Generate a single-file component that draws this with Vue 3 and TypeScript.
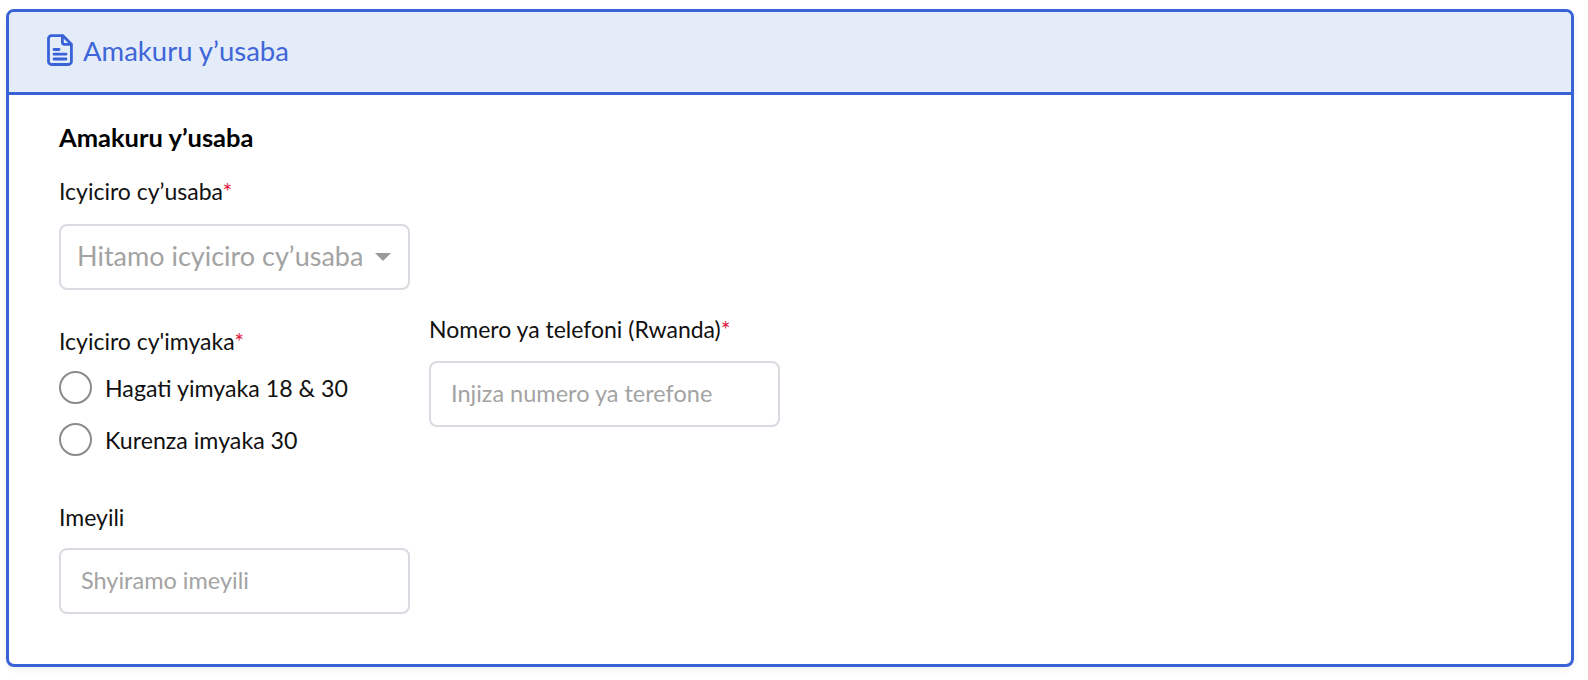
<script setup lang="ts">
const ageOptions = ["Hagati yimyaka 18 & 30", "Kurenza imyaka 30"];
</script>

<template>
  <div class="page">
    <section class="card">
      <header class="card-head">
        <svg class="head-icon" width="26" height="32" viewBox="0 0 26 32" fill="none" stroke="#3a62d7" stroke-width="2.8" stroke-linejoin="round" stroke-linecap="round">
          <path d="M4.5 1.6h11.2l8.7 8.7v17.2a3 3 0 0 1-3 3H4.5a3 3 0 0 1-3-3V4.6a3 3 0 0 1 3-3z" />
          <path d="M15.4 2v6.2a2.2 2.2 0 0 0 2.2 2.2H24" />
          <path d="M7 15.5h5M7 20.2h12M7 25h12" />
        </svg>
        <span class="head-title">Amakuru y’usaba</span>
      </header>

      <div class="card-body">
        <h2 class="section-title">Amakuru y’usaba</h2>

        <div class="field">
          <label class="field-label">Icyiciro cy’usaba<span class="req">*</span></label>
          <div class="select-box">
            <span class="select-text">Hitamo icyiciro cy’usaba</span>
            <span class="caret"></span>
          </div>
        </div>

        <div class="row">
          <div class="age-col">
            <label class="field-label">Icyiciro cy'imyaka<span class="req">*</span></label>
            <div class="radio-list">
              <div v-for="opt in ageOptions" :key="opt" class="radio-row">
                <span class="radio"></span>
                <span>{{ opt }}</span>
              </div>
            </div>
          </div>
          <div class="phone-col">
            <label class="field-label">Nomero ya telefoni (Rwanda)<span class="req">*</span></label>
            <input class="text-input" type="text" placeholder="Injiza numero ya terefone" />
          </div>
        </div>

        <div class="field email">
          <label class="field-label">Imeyili</label>
          <input class="text-input" type="email" placeholder="Shyiramo imeyili" />
        </div>
      </div>
    </section>
  </div>
</template>

<style>
html,
body {
  background: #fff;
}
</style>

<style scoped>
.page {
  padding: 9px 14px 13px 6px;
  font-family: "Lato", "Noto Sans", sans-serif;
  color: #111;
}

.card {
  height: 658px;
  box-sizing: border-box;
  border: 3px solid #3a62d7;
  border-radius: 8px;
  background: #fff;
  box-shadow: 0 3px 6px rgba(0, 0, 0, 0.06);
  overflow: hidden;
}

.card-head {
  height: 83px;
  box-sizing: border-box;
  display: flex;
  align-items: center;
  gap: 10px;
  padding-left: 38px;
  background: #e4ecfa;
  border-bottom: 3px solid #3a62d7;
}

.head-icon {
  display: block;
  margin-bottom: 5px;
}

.head-title {
  font-size: 27.5px;
  line-height: 32px;
  padding-bottom: 2px;
  color: #3f66d8;
}

.card-body {
  padding: 29px 0 0 50px;
}

.section-title {
  margin: 0;
  font-size: 25.5px;
  line-height: 26px;
  font-weight: 700;
  color: #000;
}

.field-label {
  display: block;
  font-size: 23px;
  line-height: 26px;
}

.req {
  color: #e0193f;
}

.field {
  width: 351px;
  margin-top: 28px;
}

.select-box {
  height: 66px;
  margin-top: 20px;
  box-sizing: border-box;
  display: flex;
  align-items: center;
  justify-content: space-between;
  padding: 0 17px 3px 16px;
  border: 2px solid #d9dbe0;
  border-radius: 8px;
  font-size: 27px;
  color: #a3a3a3;
}

.caret {
  width: 0;
  height: 0;
  margin-top: 3px;
  border-left: 8px solid transparent;
  border-right: 8px solid transparent;
  border-top: 8px solid #9a9a9a;
}

.row {
  display: flex;
  gap: 19px;
  margin-top: 26px;
}

.age-col {
  width: 351px;
  padding-top: 12px;
}

.phone-col {
  width: 351px;
}

.radio-list {
  margin-top: 17px;
  display: flex;
  flex-direction: column;
  gap: 19px;
}

.radio-row {
  display: flex;
  align-items: center;
  gap: 13px;
  font-size: 23.2px;
}

.radio {
  width: 33px;
  height: 33px;
  box-sizing: border-box;
  border: 2px solid #8a8a8a;
  border-radius: 50%;
}

.text-input {
  display: block;
  width: 351px;
  height: 66px;
  margin-top: 19px;
  box-sizing: border-box;
  padding: 0 20px 3px;
  border: 2px solid #d9dbe0;
  border-radius: 8px;
  font-family: inherit;
  font-size: 23.5px;
  background: #fff;
  outline: none;
}

.text-input::placeholder {
  color: #a3a3a3;
  opacity: 1;
}

.email {
  margin-top: 48px;
}

.email .text-input {
  margin-top: 18px;
}
</style>
